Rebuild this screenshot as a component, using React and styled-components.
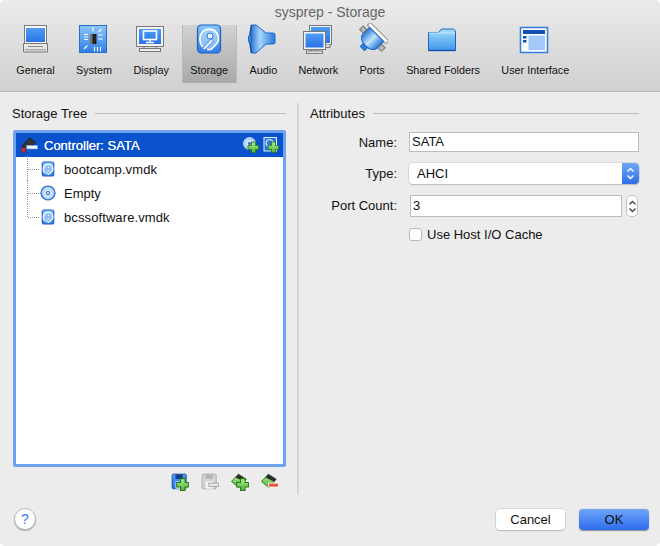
import React from 'react'
import styled, { createGlobalStyle } from 'styled-components'

const Global = createGlobalStyle`
  html, body { margin: 0; padding: 0; background: #fff; }
  body { font-family: "Liberation Sans", Arial, sans-serif; color: #111; }
`

const Window = styled.div`
  width: 660px;
  height: 546px;
  display: flex;
  flex-direction: column;
  background: #ececec;
  border-radius: 5px;
  overflow: hidden;
`
const Header = styled.header`
  height: 91px;
  flex: none;
  background: linear-gradient(#ebebeb, #d0d0d0);
  border-bottom: 1px solid #b4b4b4;
`
const Title = styled.div`
  height: 25px;
  line-height: 24px;
  text-align: center;
  font-size: 14px;
  color: #666;
`
const Toolbar = styled.nav`
  display: flex;
  padding-left: 7.8px;
  gap: 4.4px;
`
const Tool = styled.div`
  height: 58px;
  padding: 0 8.5px;
  display: flex;
  flex-direction: column;
  align-items: center;
  font-size: 10.8px;
  color: #111;
  white-space: nowrap;
  background: ${p => p.$active ? 'linear-gradient(#d2d2d2, #a9a9a9)' : 'none'};
  box-shadow: ${p => p.$active ? 'inset 1px 0 #bbb, inset -1px 0 #bbb' : 'none'};
  svg { flex: none; margin: -2px -6px 0; }
  span { margin-top: 8px; line-height: 14px; }
`
const Body = styled.main`
  flex: 1;
  display: flex;
  padding: 11px 21px 0 12px;
`
const Left = styled.section`
  width: 274px;
  height: 392px;
  display: flex;
  flex-direction: column;
`
const Divider = styled.div`
  width: 2px;
  height: 392px;
  margin: 0 11px 0 11px;
  background: #d6d6d6;
`
const Right = styled.section`
  flex: 1;
`
const Legend = styled.div`
  display: flex;
  align-items: center;
  gap: 8px;
  height: 20px;
  font-size: 13px;
  &::after {
    content: "";
    flex: 1;
    height: 1px;
    background: #bdbdbd;
  }
`
const Tree = styled.div`
  margin: 7px 0 0 1px;
  height: 331px;
  background: #fff;
  border: 3px solid #6fa2ee;
  border-radius: 2px;
`
const Row = styled.div`
  height: 24px;
  display: flex;
  align-items: center;
  font-size: 13px;
  position: relative;
  padding-left: ${p => p.$child ? '24px' : '4px'};
  background: ${p => p.$selected ? '#0a52cc' : 'transparent'};
  color: ${p => p.$selected ? '#fff' : '#111'};
  text-shadow: ${p => p.$selected ? '0 0 0.4px #fff' : 'none'};
`
const Dots = styled.i`
  position: absolute;
  left: 11px;
  top: -1px;
  width: 11px;
  height: ${p => p.$last ? '13px' : '24px'};
  border-left: 1px dotted #999;
  &::after {
    content: "";
    position: absolute;
    left: 0;
    top: 13px;
    width: 11px;
    border-top: 1px dotted #999;
  }
`
const RowName = styled.span`
  margin-left: ${p => p.$gap}px;
  flex: 1;
  letter-spacing: ${p => p.$spaced ? '0.1px' : '0'};
`
const RowActions = styled.div`
  display: flex;
  gap: 4px;
  padding-right: 4px;
`
const TreeTools = styled.div`
  display: flex;
  justify-content: flex-end;
  gap: 12px;
  padding: 6px 7px 0 0;
`
const Field = styled.div`
  display: grid;
  grid-template-columns: 87px 230px;
  column-gap: 12px;
  align-items: center;
  margin-top: ${p => p.$top}px;
  font-size: 13px;
  label { text-align: right; }
`
const TextBox = styled.div`
  height: ${p => p.$height}px;
  line-height: ${p => p.$height}px;
  padding-left: 2px;
  background: #fff;
  border: 1px solid #bcbcbc;
  width: ${p => p.$width || 'auto'};
  margin-left: ${p => p.$indent || 0};
`
const Select = styled.div`
  height: 21px;
  display: flex;
  background: #fff;
  border-radius: 4px;
  box-shadow: 0 0 0 0.5px #c4c4c4, 0 1px 1px #b5b5b5;
  overflow: hidden;
  line-height: 21px;
  padding-left: 8px;
  span { flex: 1; }
`
const SelectArrow = styled.div`
  width: 17px;
  background: linear-gradient(#6ea8f9, #2e6ee8);
  display: flex;
  align-items: center;
  justify-content: center;
`
const SpinRow = styled.div`
  display: flex;
  align-items: center;
  gap: 4px;
`
const Stepper = styled.div`
  width: 10px;
  height: 20px;
  margin-top: 1px;
  background: #fff;
  border-radius: 5px;
  border: 1px solid #c2c2c2;
  display: flex;
  align-items: center;
  justify-content: center;
`
const CheckRow = styled.div`
  display: flex;
  align-items: center;
  gap: 5px;
  margin-top: 10px;
  grid-column: 2;
  font-size: 13px;
`
const Check = styled.div`
  width: 11px;
  height: 11px;
  background: #fff;
  border: 1px solid #b8b8b8;
  border-radius: 3px;
`
const Footer = styled.footer`
  height: 32px;
  flex: none;
  margin-bottom: 11px;
  padding: 0 11px 0 14px;
  display: flex;
  align-items: center;
  gap: 14px;
`
const Help = styled.div`
  width: 20px;
  height: 20px;
  border-radius: 50%;
  background: #fff;
  border: 0.5px solid #bdbdbd;
  box-shadow: 0 1px 1px #aaa;
  color: #3b7bf0;
  font-size: 14px;
  text-align: center;
  line-height: 20px;
  margin-right: auto;
`
const Button = styled.div`
  width: ${p => p.$primary ? '70px' : '69px'};
  height: 21px;
  line-height: 21px;
  text-align: center;
  font-size: 13px;
  border-radius: 4px;
  color: #111;
  background: ${p => p.$primary ? 'linear-gradient(#6ea6f8, #2f6cf0)' : '#fff'};
  box-shadow: ${p => p.$primary ? '0 0.5px 1px #8a8a8a' : '0 0 0 0.5px #c4c4c4, 0 1px 1px #b0b0b0'};
`

// shared gradients, same ids in each svg
const Grads = () => (
  <defs>
    <linearGradient id="scr" x1="0" y1="0" x2="0" y2="1">
      <stop offset="0" stopColor="#4f9df5" /><stop offset="1" stopColor="#2a72e6" />
    </linearGradient>
    <linearGradient id="tile" x1="0" y1="0" x2="0" y2="1">
      <stop offset="0" stopColor="#8cc6f9" /><stop offset="1" stopColor="#2f7de6" />
    </linearGradient>
    <linearGradient id="metal" x1="0" y1="0" x2="1" y2="0">
      <stop offset="0" stopColor="#1e6bd0" /><stop offset=".4" stopColor="#a8d6fb" /><stop offset="1" stopColor="#2a78dc" />
    </linearGradient>
    <linearGradient id="folder" x1="0" y1="0" x2="0" y2="1">
      <stop offset="0" stopColor="#a5dcfb" /><stop offset="1" stopColor="#3d97ea" />
    </linearGradient>
    <linearGradient id="green" x1="0" y1="0" x2="0" y2="1">
      <stop offset="0" stopColor="#b2ee90" /><stop offset="1" stopColor="#4db436" />
    </linearGradient>
    <linearGradient id="plug" x1="0" y1="0" x2="1" y2="0">
      <stop offset="0" stopColor="#2a78dc" /><stop offset=".5" stopColor="#bfe4fc" /><stop offset="1" stopColor="#2a78dc" />
    </linearGradient>
    <radialGradient id="cd">
      <stop offset="0" stopColor="#fff" /><stop offset=".6" stopColor="#c8dffa" /><stop offset="1" stopColor="#8db8ef" />
    </radialGradient>
  </defs>
)

const Svg = ({ size = 32, children }) => (
  <svg width={size} height={size} viewBox="0 0 32 32">
    <Grads />
    {children}
  </svg>
)

const GeneralIcon = () => (
  <Svg>
    <rect x="4.5" y="2.5" width="22" height="19" fill="#f6f6f6" stroke="#7b7b7b" />
    <rect x="6" y="5" width="19" height="14" fill="url(#scr)" />
    <path d="M3.5 20.5h24v8.5h-24z" fill="#e8e8e8" stroke="#777" />
    <path d="M8 23.5h15" stroke="#888" fill="none" />
    <rect x="5" y="26" width="21" height="1.4" fill="#aaa" />
  </Svg>
)

const SystemIcon = () => (
  <Svg>
    <g transform="translate(-1 0)">
      <rect x="2.5" y="2.5" width="27" height="27" fill="url(#tile)" stroke="#2a6fd0" />
      <rect x="13" y="11" width="6.5" height="10" fill="#222" />
      <rect x="13" y="11" width="2.5" height="10" fill="#777" />
      <path d="M16 4.5v4M7 11.5h4M7 14h4M7 16.5h4M21.5 12h4M21.5 16h4M17.5 24v4.5M20.5 24v4.5M23.5 24v4.5M7 26l3.5-3.5M21.5 9l3-3" stroke="#fff" strokeWidth="1.1" fill="none" />
    </g>
  </Svg>
)

const DisplayIcon = () => (
  <Svg>
    <g transform="translate(-1 0)">
      <rect x="2.5" y="3.5" width="27" height="20" fill="#f4f4f4" stroke="#777" />
      <rect x="5" y="6" width="22" height="15" fill="url(#scr)" />
      <rect x="9.5" y="8" width="13" height="8.5" fill="none" stroke="#fff" strokeWidth="1.6" />
      <path d="M16 16.5v2.5M12 19.5h8" stroke="#fff" strokeWidth="1.3" />
      <path d="M10 23.5v2M22 23.5v2" stroke="#777" />
      <rect x="5.5" y="25.5" width="21" height="3" fill="#ededed" stroke="#777" />
    </g>
  </Svg>
)

const DiskIcon = ({ size = 32 }) => (
  <Svg size={size}>
    <rect x="4.5" y="2" width="23" height="28" rx="4" fill="url(#tile)" stroke="#1a5fc2" strokeWidth={size < 32 ? 2.2 : 1.2} />
    <path d="M9.5 24C6 19 6 13 9 9.5c3.5-4.5 11-4.5 14.5 0 3 4 2.5 9-.5 12l-5 5H14" fill="#cfe8fc" fillOpacity=".5" stroke="#fff" strokeWidth={size < 32 ? 2.4 : 1.6} />
    <circle cx="17" cy="13" r="3" fill="#e8f4fe" stroke="#2a78dc" />
    <path d="M9 26l9-10 2.5 2-8.5 9z" fill="#e6f3fe" stroke="#2a78dc" strokeWidth=".8" />
  </Svg>
)

const AudioIcon = () => (
  <Svg>
    <path d="M4.5 2h4.5l10 8h7q2 0 2 2v7q0 2-2 2h-7l-10 9H4.5c-2-9-2-19 0-28z" fill="url(#metal)" stroke="#1d64c8" />
    <path d="M4.5 2c-2 9-2 19 0 28" fill="none" stroke="#15509f" strokeWidth="1.5" />
    <rect x="1.5" y="12.5" width="3" height="7" rx="1" fill="#3c86de" stroke="#1d64c8" />
  </Svg>
)

const NetworkIcon = () => (
  <Svg>
    <rect x="7.5" y="2.5" width="22" height="19" fill="#f3f3f3" stroke="#777" />
    <rect x="9" y="4" width="19" height="16" fill="url(#scr)" />
    <path d="M23 21.5v3h5v-3" fill="#ddd" stroke="#777" />
    <rect x="1.5" y="8.5" width="22" height="18" fill="#f5f5f5" stroke="#777" />
    <rect x="3.5" y="10.5" width="18" height="14" fill="url(#scr)" />
    <path d="M9 26.5v2M15 26.5v2" stroke="#777" />
    <rect x="4.5" y="28" width="16" height="2.4" fill="#eee" stroke="#777" />
  </Svg>
)

const PortsIcon = () => (
  <Svg>
    <g transform="rotate(45 16 16)">
      <rect x="3" y="5.5" width="26" height="4" fill="#fff" stroke="#888" />
      <path d="M6 9.5h20v9c0 4-4 7-10 7s-10-3-10-7z" fill="url(#plug)" stroke="#1d64c8" />
      <rect x="0.5" y="13" width="5" height="5" fill="#bbb" stroke="#777" />
      <rect x="26.5" y="13" width="5" height="5" fill="#bbb" stroke="#777" />
      <rect x="13" y="25.5" width="6" height="4" fill="#2f7fe0" stroke="#1d64c8" />
    </g>
  </Svg>
)

const FolderIcon = () => (
  <Svg>
    <g transform="translate(-1 0)">
      <path d="M2.5 27.5V9.5h10l3-3.5h12l2 2v19.5z" fill="url(#folder)" stroke="#1d64c8" />
      <path d="M3 10h26" stroke="#d4eefd" />
      <path d="M2.5 27.5h27" stroke="#1450a8" strokeWidth="1.4" />
    </g>
  </Svg>
)

const InterfaceIcon = () => (
  <Svg>
    <g transform="translate(-1 1)">
      <rect x="2.5" y="3.5" width="27" height="25" fill="#fff" stroke="#3b80dc" strokeWidth="1.6" />
      <rect x="5" y="6" width="22" height="4" fill="#0f4fb0" />
      <rect x="5" y="12" width="3.5" height="2.5" fill="#0f4fb0" />
      <rect x="5" y="16" width="3.5" height="2.5" fill="#0f4fb0" />
      <rect x="10.5" y="11.5" width="16.5" height="14.5" fill="#a4c8fa" />
    </g>
  </Svg>
)

const CdIcon = ({ size = 16 }) => (
  <Svg size={size}>
    <circle cx="16" cy="16" r="14" fill="url(#cd)" stroke="#1f68cc" strokeWidth="2.4" />
    <circle cx="16" cy="16" r="5.5" fill="#3f80dc" stroke="#fff" strokeWidth="1.5" />
    <circle cx="16" cy="16" r="1.8" fill="#fff" />
  </Svg>
)

const Plus = () => (
  <path d="M17 10h8v7h6v8h-6v6h-8v-6h-7v-8h7z" fill="url(#green)" stroke="#2d7a1e" strokeWidth="1.8" />
)

const ControllerIcon = () => (
  <Svg size={18}>
    <path d="M3 19L17 3l11 8-8 8z" fill="#333" stroke="#111" />
    <rect x="12" y="17" width="19" height="6" fill="#eef5fd" stroke="#8ab2ec" />
    <path d="M2 20l9 3-3 6H4z" fill="#d8301c" stroke="#8c1a0c" />
  </Svg>
)

const AddCdIcon = () => (
  <Svg size={16}>
    <circle cx="13" cy="13" r="12" fill="url(#cd)" stroke="#e8f2fd" strokeWidth="1.6" />
    <circle cx="13" cy="13" r="4" fill="#2a78dc" stroke="#fff" />
    <Plus />
  </Svg>
)

const AddDiskIcon = () => (
  <Svg size={16}>
    <rect x="2" y="1" width="25" height="27" fill="#2a78dc" stroke="#dff0ff" strokeWidth="2" />
    <circle cx="13" cy="12" r="7" fill="none" stroke="#fff" strokeWidth="2" />
    <Plus />
  </Svg>
)

const FloppyIcon = ({ off, plus }) => (
  <Svg size={18}>
    <rect x="2" y="2" width="25" height="26" rx="2" fill={off ? '#d4d4d4' : 'url(#scr)'} stroke={off ? '#a8a8a8' : '#14509f'} strokeWidth="1.6" />
    <rect x="8" y="2.5" width="13" height="8" fill={off ? '#b5b5b5' : '#123f86'} />
    <rect x="8" y="15" width="14" height="13" fill={off ? '#f2f2f2' : '#dcebfb'} />
    {plus && <Plus />}
    {off && <rect x="14" y="18" width="17" height="6" fill="#e8e8e8" stroke="#999" strokeWidth="1.4" />}
  </Svg>
)

const AttachIcon = ({ minus }) => (
  <Svg size={18}>
    <path d="M1 15L13 2l14 9-13 15z" fill="url(#green)" stroke="#2b6e20" strokeWidth="1.6" />
    <path d="M8 8l5-6 14 9-4 4z" fill="#2b2b2b" />
    {minus
      ? <rect x="13" y="18" width="18" height="7" fill="#e8553f" stroke="#fff" strokeWidth="1.4" />
      : <Plus />}
  </Svg>
)

const Arrows = ({ color }) => (
  <svg width="9" height="15" viewBox="0 0 9 15">
    <path d="M1.5 5.5l3-3 3 3M1.5 9.5l3 3 3-3" fill="none" stroke={color} strokeWidth="1.4" />
  </svg>
)

const tools = [
  ['General', GeneralIcon],
  ['System', SystemIcon],
  ['Display', DisplayIcon],
  ['Storage', DiskIcon],
  ['Audio', AudioIcon],
  ['Network', NetworkIcon],
  ['Ports', PortsIcon],
  ['Shared Folders', FolderIcon],
  ['User Interface', InterfaceIcon],
]

const App = () => (
  <Window>
    <Global />
    <Header>
      <Title>sysprep - Storage</Title>
      <Toolbar>
        {tools.map(([name, Icon]) => (
          <Tool key={name} $active={name === 'Storage'}>
            <Icon />
            <span>{name}</span>
          </Tool>
        ))}
      </Toolbar>
    </Header>
    <Body>
      <Left>
        <Legend>Storage Tree</Legend>
        <Tree>
          <Row $selected>
            <ControllerIcon />
            <RowName $gap={6}>Controller: SATA</RowName>
            <RowActions><AddCdIcon /><AddDiskIcon /></RowActions>
          </Row>
          <Row $child><Dots /><DiskIcon size={16} /><RowName $gap={8} $spaced>bootcamp.vmdk</RowName></Row>
          <Row $child><Dots /><CdIcon /><RowName $gap={8}>Empty</RowName></Row>
          <Row $child><Dots $last /><DiskIcon size={16} /><RowName $gap={8} $spaced>bcssoftware.vmdk</RowName></Row>
        </Tree>
        <TreeTools>
          <FloppyIcon plus />
          <FloppyIcon off />
          <AttachIcon />
          <AttachIcon minus />
        </TreeTools>
      </Left>
      <Divider />
      <Right>
        <Legend>Attributes</Legend>
        <Field $top={9}>
          <label>Name:</label>
          <TextBox $height={18}>SATA</TextBox>
        </Field>
        <Field $top={11}>
          <label>Type:</label>
          <Select>
            <span>AHCI</span>
            <SelectArrow><Arrows color="#fff" /></SelectArrow>
          </Select>
        </Field>
        <Field $top={10}>
          <label>Port Count:</label>
          <SpinRow>
            <TextBox $height={20} $width="208px" $indent="1px">3</TextBox>
            <Stepper><Arrows color="#444" /></Stepper>
          </SpinRow>
        </Field>
        <Field>
          <span />
          <CheckRow>
            <Check />
            <span>Use Host I/O Cache</span>
          </CheckRow>
        </Field>
      </Right>
    </Body>
    <Footer>
      <Help>?</Help>
      <Button>Cancel</Button>
      <Button $primary>OK</Button>
    </Footer>
  </Window>
)

export default App
